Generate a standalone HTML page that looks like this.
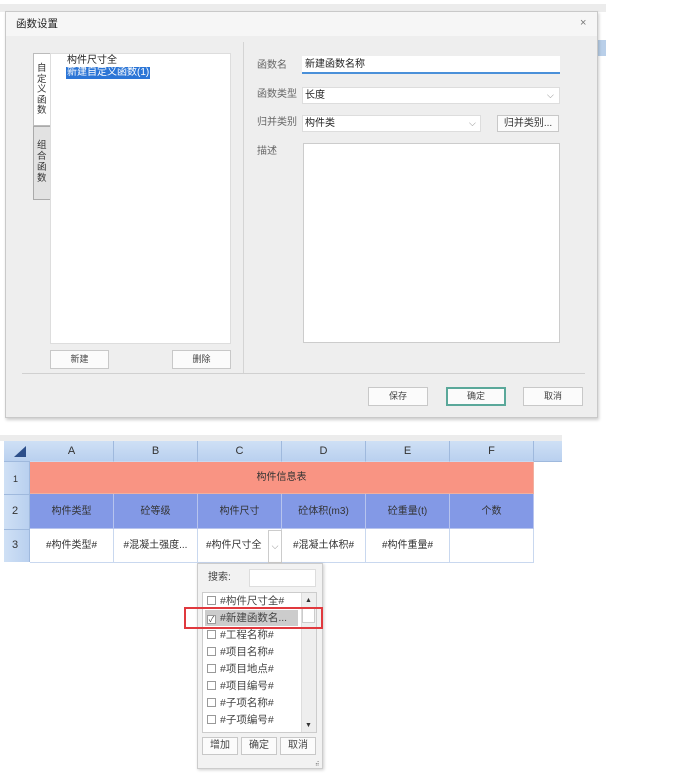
<!DOCTYPE html>
<html><head><meta charset="utf-8"><style>
*{box-sizing:border-box;margin:0;padding:0}
body{width:676px;height:781px;background:#fff;position:relative;overflow:hidden;font-family:"Liberation Sans","Noto Sans CJK SC",sans-serif;font-size:10px;line-height:12px;color:#333}
.a{position:absolute}
.btn{position:absolute;background:#fbfbfb;border:1px solid #c8c8c8;text-align:center;font-size:9px;color:#444}
.cell{position:absolute;text-align:center;font-size:10px;color:#333;border-right:1px solid #c9d8ef;border-bottom:1px solid #c9d8ef}
.hd{background:linear-gradient(#cfe0f5,#b9d0ef);border-right:1px solid #9fb9dd;color:#333;font-size:11px}
.it{position:absolute;left:10px;font-size:10.5px;line-height:13px;color:#444;white-space:nowrap}
.cb{display:inline-block;width:9px;height:9px;border:1px solid #999;background:#fff;margin-right:4px;vertical-align:-1px}
</style></head><body>
<div class="a" style="left:0;top:4px;width:606px;height:8px;background:#ececec"></div>
<div class="a" style="left:598px;top:40px;width:8px;height:16px;background:#b9cfe9"></div>
<div class="a" style="left:5px;top:11px;width:593px;height:407px;background:#eeeeee;border:1px solid #c9c9c9;box-shadow:1px 2px 3px rgba(0,0,0,.2)">
 <div class="a" style="left:0;top:0;width:591px;height:24px;background:#f6f6f6"></div>
 <div class="a" style="left:10px;top:6px;font-size:10.5px;color:#222">函数设置</div>
 <div class="a" style="left:574px;top:5px;font-size:11px;color:#777">×</div>
</div>
<!-- left tabs and list -->
<div class="a" style="left:33px;top:53px;width:18px;height:73px;background:#fff;border:1px solid #bbb;border-right:none"></div>
<div class="a" style="left:37px;top:64px;width:10px;font-size:9.5px;line-height:10.5px;color:#333">自定义函数</div>
<div class="a" style="left:33px;top:126px;width:18px;height:74px;background:#e2e2e2;border:1px solid #aaa"></div>
<div class="a" style="left:37px;top:140px;width:10px;font-size:9.5px;line-height:11px;color:#333">组合函数</div>
<div class="a" style="left:50px;top:53px;width:181px;height:291px;background:#fff;border:1px solid #ddd"></div>
<div class="a" style="left:67px;top:55px;font-size:10px;line-height:11px;color:#222">构件尺寸全</div>
<div class="a" style="left:66px;top:67px;background:#2b75d6;color:#fff;font-size:10px;padding:0 1px;line-height:12px">新建自定义函数(1)</div>
<div class="btn" style="left:50px;top:350px;width:59px;height:19px;line-height:17px">新建</div>
<div class="btn" style="left:172px;top:350px;width:59px;height:19px;line-height:17px">删除</div>
<div class="a" style="left:243px;top:42px;width:1px;height:331px;background:#d4d4d4"></div>
<div class="a" style="left:22px;top:373px;width:563px;height:1px;background:#d0d0d0"></div>
<!-- right form -->
<div class="a" style="left:257px;top:60px;color:#666">函数名</div>
<div class="a" style="left:302px;top:56px;width:258px;height:18px;background:#fff;border-bottom:2px solid #4a90d9"></div>
<div class="a" style="left:305px;top:59px;color:#222">新建函数名称</div>
<div class="a" style="left:257px;top:89px;color:#666">函数类型</div>
<div class="a" style="left:302px;top:87px;width:258px;height:17px;background:#fff;border:1px solid #ddd"></div>
<div class="a" style="left:305px;top:90px;color:#222">长度</div>
<div class="a" style="left:547px;top:89px;color:#888;font-size:9px">⌵</div>
<div class="a" style="left:257px;top:117px;color:#666">归并类别</div>
<div class="a" style="left:302px;top:115px;width:179px;height:17px;background:#fff;border:1px solid #ddd"></div>
<div class="a" style="left:305px;top:118px;color:#222">构件类</div>
<div class="a" style="left:469px;top:117px;color:#888;font-size:9px">⌵</div>
<div class="btn" style="left:497px;top:115px;width:62px;height:17px;line-height:15px;font-size:10px;color:#333">归并类别...</div>
<div class="a" style="left:257px;top:146px;color:#666">描述</div>
<div class="a" style="left:303px;top:143px;width:257px;height:200px;background:#fff;border:1px solid #ccc"></div>
<div class="btn" style="left:368px;top:387px;width:60px;height:19px;line-height:17px">保存</div>
<div class="btn" style="left:446px;top:387px;width:60px;height:19px;border:2px solid #5aa89a;line-height:15px">确定</div>
<div class="btn" style="left:523px;top:387px;width:60px;height:19px;line-height:17px">取消</div>
<!-- spreadsheet -->
<div class="a" style="left:0;top:435px;width:562px;height:6px;background:#ececec"></div>
<div class="a" style="left:4px;top:441px;width:558px;height:21px;background:linear-gradient(#cfe0f5,#b9d0ef);border-bottom:1px solid #9fb9dd"></div>
<div class="a" style="left:14px;top:446px;width:0;height:0;border-left:12px solid transparent;border-bottom:11px solid #2d4f8a"></div>
<div class="cell hd" style="left:30px;top:441px;width:84px;height:21px;line-height:20px">A</div>
<div class="cell hd" style="left:114px;top:441px;width:84px;height:21px;line-height:20px">B</div>
<div class="cell hd" style="left:198px;top:441px;width:84px;height:21px;line-height:20px">C</div>
<div class="cell hd" style="left:282px;top:441px;width:84px;height:21px;line-height:20px">D</div>
<div class="cell hd" style="left:366px;top:441px;width:84px;height:21px;line-height:20px">E</div>
<div class="cell hd" style="left:450px;top:441px;width:84px;height:21px;line-height:20px">F</div>
<div class="a" style="left:4px;top:462px;width:26px;height:100px;background:linear-gradient(90deg,#cfe0f5,#b9d0ef);border-right:1px solid #9fb9dd"></div>
<div class="a" style="left:4px;top:494px;width:26px;height:1px;background:#9fb9dd"></div>
<div class="a" style="left:4px;top:529px;width:26px;height:1px;background:#9fb9dd"></div>
<div class="a" style="left:13px;top:473px;font-size:9px">1</div>
<div class="a" style="left:12px;top:505px;font-size:11px">2</div>
<div class="a" style="left:12px;top:539px;font-size:11px">3</div>
<div class="cell" style="left:30px;top:462px;width:504px;height:32px;line-height:32px;background:#f99483;border-color:#f0b0a0">构件信息表</div>
<div class="cell" style="left:30px;top:494px;width:84px;height:35px;line-height:35px;background:#8399e6;border-color:#b7c4ee">构件类型</div>
<div class="cell" style="left:114px;top:494px;width:84px;height:35px;line-height:35px;background:#8399e6;border-color:#b7c4ee">砼等级</div>
<div class="cell" style="left:198px;top:494px;width:84px;height:35px;line-height:35px;background:#8399e6;border-color:#b7c4ee">构件尺寸</div>
<div class="cell" style="left:282px;top:494px;width:84px;height:35px;line-height:35px;background:#8399e6;border-color:#b7c4ee">砼体积(m3)</div>
<div class="cell" style="left:366px;top:494px;width:84px;height:35px;line-height:35px;background:#8399e6;border-color:#b7c4ee">砼重量(t)</div>
<div class="cell" style="left:450px;top:494px;width:84px;height:35px;line-height:35px;background:#8399e6;border-color:#b7c4ee">个数</div>
<div class="cell" style="left:30px;top:529px;width:84px;height:34px;line-height:34px">#构件类型#</div>
<div class="cell" style="left:114px;top:529px;width:84px;height:34px;line-height:34px">#混凝土强度...</div>
<div class="cell" style="left:198px;top:529px;width:84px;height:34px;line-height:34px;text-align:left;padding-left:8px">#构件尺寸全</div>
<div class="a" style="left:268px;top:530px;width:14px;height:33px;background:#fff;border:1px solid #ccc;color:#888;font-size:9px;text-align:center;line-height:30px">⌵</div>
<div class="cell" style="left:282px;top:529px;width:84px;height:34px;line-height:34px">#混凝土体积#</div>
<div class="cell" style="left:366px;top:529px;width:84px;height:34px;line-height:34px">#构件重量#</div>
<div class="cell" style="left:450px;top:529px;width:84px;height:34px;line-height:34px"></div>
<!-- popup -->
<div class="a" style="left:197px;top:563px;width:126px;height:206px;background:#f2f2f2;border:1px solid #ccc;box-shadow:1px 1px 3px rgba(0,0,0,.2)"></div>
<div class="a" style="left:208px;top:572px;color:#444">搜索:</div>
<div class="a" style="left:249px;top:569px;width:67px;height:18px;background:#fff;border:1px solid #ddd"></div>
<div class="a" style="left:202px;top:592px;width:115px;height:141px;background:#fff;border:1px solid #ccc;overflow:hidden">
 <div class="a" style="left:98px;top:0;width:15px;height:140px;background:#eee;border-left:1px solid #ddd"></div>
 <div class="a" style="left:99px;top:14px;width:13px;height:16px;background:#fff;border:1px solid #ccc"></div>
 <div class="a" style="left:102px;top:2px;font-size:7px;color:#333">▲</div>
 <div class="a" style="left:102px;top:127px;font-size:7px;color:#333">▼</div>
 <div class="it" style="left:4px;top:2px"><span class="cb"></span>#构件尺寸全#</div>
 <div class="a" style="left:2px;top:17px;width:93px;height:16px;background:#ccc"></div>
 <div class="it" style="left:4px;top:19px"><span class="cb" style="text-align:center;font-size:8px;line-height:7px">✓</span>#新建函数名...</div>
 <div class="it" style="left:4px;top:36px"><span class="cb"></span>#工程名称#</div>
 <div class="it" style="left:4px;top:53px"><span class="cb"></span>#项目名称#</div>
 <div class="it" style="left:4px;top:70px"><span class="cb"></span>#项目地点#</div>
 <div class="it" style="left:4px;top:87px"><span class="cb"></span>#项目编号#</div>
 <div class="it" style="left:4px;top:104px"><span class="cb"></span>#子项名称#</div>
 <div class="it" style="left:4px;top:121px"><span class="cb"></span>#子项编号#</div>
</div>
<div class="a" style="left:184px;top:607px;width:139px;height:22px;border:2px solid #e0393e"></div>
<div class="btn" style="left:202px;top:737px;width:36px;height:18px;line-height:16px;font-size:10px">增加</div>
<div class="btn" style="left:241px;top:737px;width:36px;height:18px;line-height:16px;font-size:10px">确定</div>
<div class="btn" style="left:280px;top:737px;width:36px;height:18px;line-height:16px;font-size:10px">取消</div>
<div class="a" style="left:315px;top:759px;font-size:6px;color:#666">⠾</div>
</body></html>
